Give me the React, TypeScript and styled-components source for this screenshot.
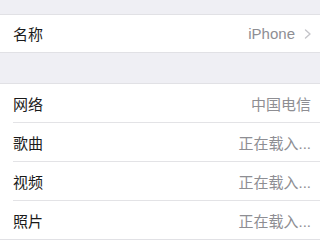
import { createGlobalStyle } from 'styled-components'
import styled from 'styled-components'

const GlobalStyle = createGlobalStyle`
  html, body {
    margin: 0;
    padding: 0;
    background: #efeff4;
  }
  body {
    font-family: 'Liberation Sans', 'Noto Sans CJK SC', sans-serif;
    -webkit-font-smoothing: antialiased;
  }
`

const Screen = styled.div`
  width: 320px;
  height: 240px;
  overflow: hidden;
  background: #efeff4;
  display: flex;
  flex-direction: column;
`

const Gap = styled.div<{ $h: number }>`
  height: ${p => p.$h}px;
  flex-shrink: 0;
`

const Group = styled.div`
  background: #fff;
  border-top: 1px solid #e1e1e5;
  border-bottom: 1px solid #e1e1e5;
  flex-shrink: 0;
`

const Row = styled.div<{ $h: number }>`
  height: ${p => p.$h}px;
  display: flex;
  align-items: center;
  justify-content: space-between;
  padding: 0 9px 0 13px;
  position: relative;
  font-size: 15px;

  & + &::before {
    content: '';
    position: absolute;
    top: -1px;
    left: 13px;
    right: 0;
    height: 1px;
    background: #e3e3e6;
  }
  & + & {
    margin-top: 1px;
  }
`

const Label = styled.span`
  color: #1a1a1a;
`

const Value = styled.span<{ $arrow?: boolean }>`
  color: #8e8e93;
  display: flex;
  align-items: center;
  gap: 9px;
  margin-right: ${p => (p.$arrow ? '-1px' : '0')};
`

const Chevron = () => (
  <svg width="8" height="10" viewBox="0 0 8 10">
    <path d="M1.5 1l4.5 4-4.5 4" fill="none" stroke="#c4c4c9" strokeWidth="1.4" strokeLinecap="round" strokeLinejoin="round" />
  </svg>
)

const items = [
  { label: '网络', value: '中国电信' },
  { label: '歌曲', value: '正在载入...' },
  { label: '视频', value: '正在载入...' },
  { label: '照片', value: '正在载入...' },
]

export default function App() {
  return (
    <Screen>
      <GlobalStyle />
      <Gap $h={14} />
      <Group>
        <Row $h={37}>
          <Label>名称</Label>
          <Value $arrow>
            iPhone
            <Chevron />
          </Value>
        </Row>
      </Group>
      <Gap $h={30} />
      <Group>
        {items.map(it => (
          <Row $h={38} key={it.label}>
            <Label>{it.label}</Label>
            <Value>{it.value}</Value>
          </Row>
        ))}
      </Group>
    </Screen>
  )
}
